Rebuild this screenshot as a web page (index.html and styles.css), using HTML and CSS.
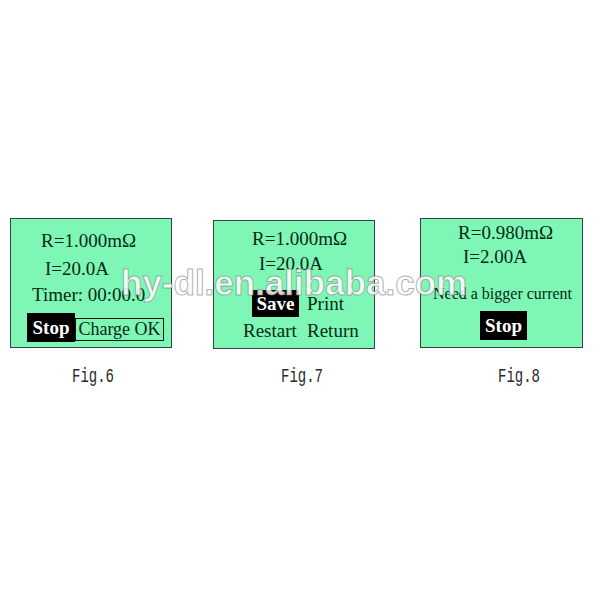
FILE: index.html
```html
<!DOCTYPE html>
<html>
<head>
<meta charset="utf-8">
<link rel="stylesheet" href="styles.css">
</head>
<body>
<div class="page">
  <div class="panels">
    <div class="lcd lcd6">
      <div class="ln p6l1">R=1.000mΩ</div>
      <div class="ln p6l2">I=20.0A</div>
      <div class="ln p6l3">Timer: 00:00.0</div>
      <div class="btnrow">
        <span class="inv stop6">Stop</span>
        <span class="framed">Charge OK</span>
      </div>
    </div>
    <div class="lcd lcd7">
      <div class="ln p7l1">R=1.000mΩ</div>
      <div class="ln p7l2">I=20.0A</div>
      <div class="menu">
        <span class="inv save">Save</span>
        <span class="opt">Print</span>
        <span class="opt restart">Restart</span>
        <span class="opt">Return</span>
      </div>
    </div>
    <div class="lcd lcd8">
      <div class="ln8 p8l1">R=0.980mΩ</div>
      <div class="ln8 p8l2">I=2.00A</div>
      <div class="msg">Need a bigger current</div>
      <div class="inv stop8">Stop</div>
    </div>
  </div>
  <div class="captions">
    <span class="cap cap6">Fig.6</span>
    <span class="cap cap7">Fig.7</span>
    <span class="cap cap8">Fig.8</span>
  </div>
  <div class="watermark">hy-dl.en.alibaba.com</div>
</div>
</body>
</html>
```
FILE: styles.css
```css
html, body {
  margin: 0;
  padding: 0;
  background: #ffffff;
}
.page {
  position: relative;
  width: 600px;
  height: 600px;
  padding-top: 218px;
  box-sizing: border-box;
  font-family: "Liberation Serif", "Times New Roman", serif;
  color: #082a14;
}
.panels {
  display: flex;
  align-items: flex-start;
}
.lcd {
  box-sizing: border-box;
  background: #7ef7b6;
  border: 1px solid #34463b;
  font-size: 19px;
}
.lcd6 { width: 162px; height: 130px; margin-left: 10px; padding-top: 9px; }
.lcd7 { width: 162px; height: 129px; margin-left: 41px; margin-top: 2px; padding-top: 5px; }
.lcd8 { width: 163px; height: 130px; margin-left: 45px; padding-top: 2px; }

.ln { line-height: 26px; height: 26px; white-space: nowrap; }
.p6l1 { padding-left: 30px; }
.p6l2 { padding-left: 34px; margin-top: 2px; }
.p6l3 { padding-left: 21px; }

.btnrow {
  display: flex;
  align-items: flex-start;
  margin-top: 5px;
  padding-left: 16px;
}
.inv {
  background: #000;
  color: #fff;
  font-weight: bold;
  text-align: center;
}
.stop6 {
  width: 48px;
  height: 29px;
  line-height: 29px;
}
.framed {
  box-sizing: border-box;
  margin-top: 5px;
  width: 89px;
  height: 23px;
  border: 1px solid #111;
  font-size: 18px;
  line-height: 21px;
  text-align: center;
  white-space: nowrap;
}

.p7l1 { padding-left: 38px; }
.p7l2 { padding-left: 45px; margin-top: -1px; }
.menu {
  display: grid;
  grid-template-columns: 56px auto;
  column-gap: 8px;
  margin-top: 13px;
  padding-left: 29px;
  line-height: 27px;
}
.menu > span { height: 27px; white-space: nowrap; }
.save { justify-self: end; width: 47px; }
.restart { justify-self: start; }

.ln8 { line-height: 24px; height: 24px; white-space: nowrap; }
.p8l1 { padding-left: 37px; }
.p8l2 { padding-left: 42px; }
.msg {
  font-size: 16px;
  line-height: 20px;
  margin-top: 15px;
  padding-left: 12px;
  white-space: nowrap;
}
.stop8 {
  margin-top: 7px;
  margin-left: 59px;
  width: 47px;
  height: 29px;
  line-height: 29px;
}

.captions {
  display: flex;
  margin-top: 18px;
}
.cap {
  display: inline-block;
  width: 60px;
  font-family: "Liberation Mono", "Courier New", monospace;
  font-size: 20px;
  line-height: 20px;
  color: #2a2a2a;
  transform: scaleX(0.7);
  transform-origin: left center;
}
.cap6 { margin-left: 72px; }
.cap7 { margin-left: 149px; }
.cap8 { margin-left: 157px; }

.watermark {
  position: absolute;
  left: 121px;
  top: 265px;
  font-family: "Liberation Sans", Arial, sans-serif;
  font-size: 35px;
  font-weight: bold;
  line-height: 35px;
  color: rgba(255, 255, 255, 0.85);
  -webkit-text-stroke: 1px rgba(120, 120, 120, 0.6);
  white-space: nowrap;
}
```
